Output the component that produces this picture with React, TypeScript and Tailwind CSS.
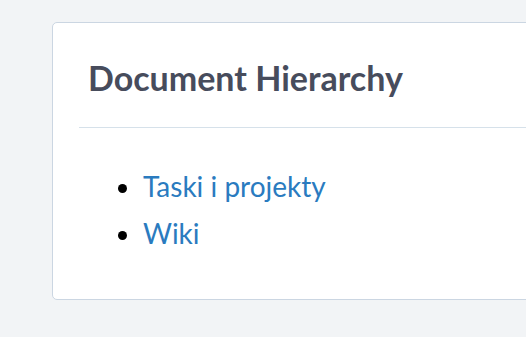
export default function App() {
  return (
    <div className="h-[337px] w-[526px] overflow-hidden bg-[#f2f4f6] pl-[52px] pt-[22px] font-['Lato',sans-serif]">
      <div className="h-[278px] w-[560px] rounded-[5px] border border-[#cbd6e2] bg-white">
        <div className="mx-[26px] border-b border-[#d6e1ea] pl-[9px] pt-[33px] pb-[27px]">
          <h2 className="text-[34px] font-bold leading-[44px] text-[#474c5c]">
            Document Hierarchy
          </h2>
        </div>
        <ul className="list-disc pl-[90px] pt-[35px] text-[28px] leading-[47px] text-[#2a7bbf] marker:text-black">
          <li>
            <a href="#">Taski i projekty</a>
          </li>
          <li>
            <a href="#">Wiki</a>
          </li>
        </ul>
      </div>
    </div>
  );
}
